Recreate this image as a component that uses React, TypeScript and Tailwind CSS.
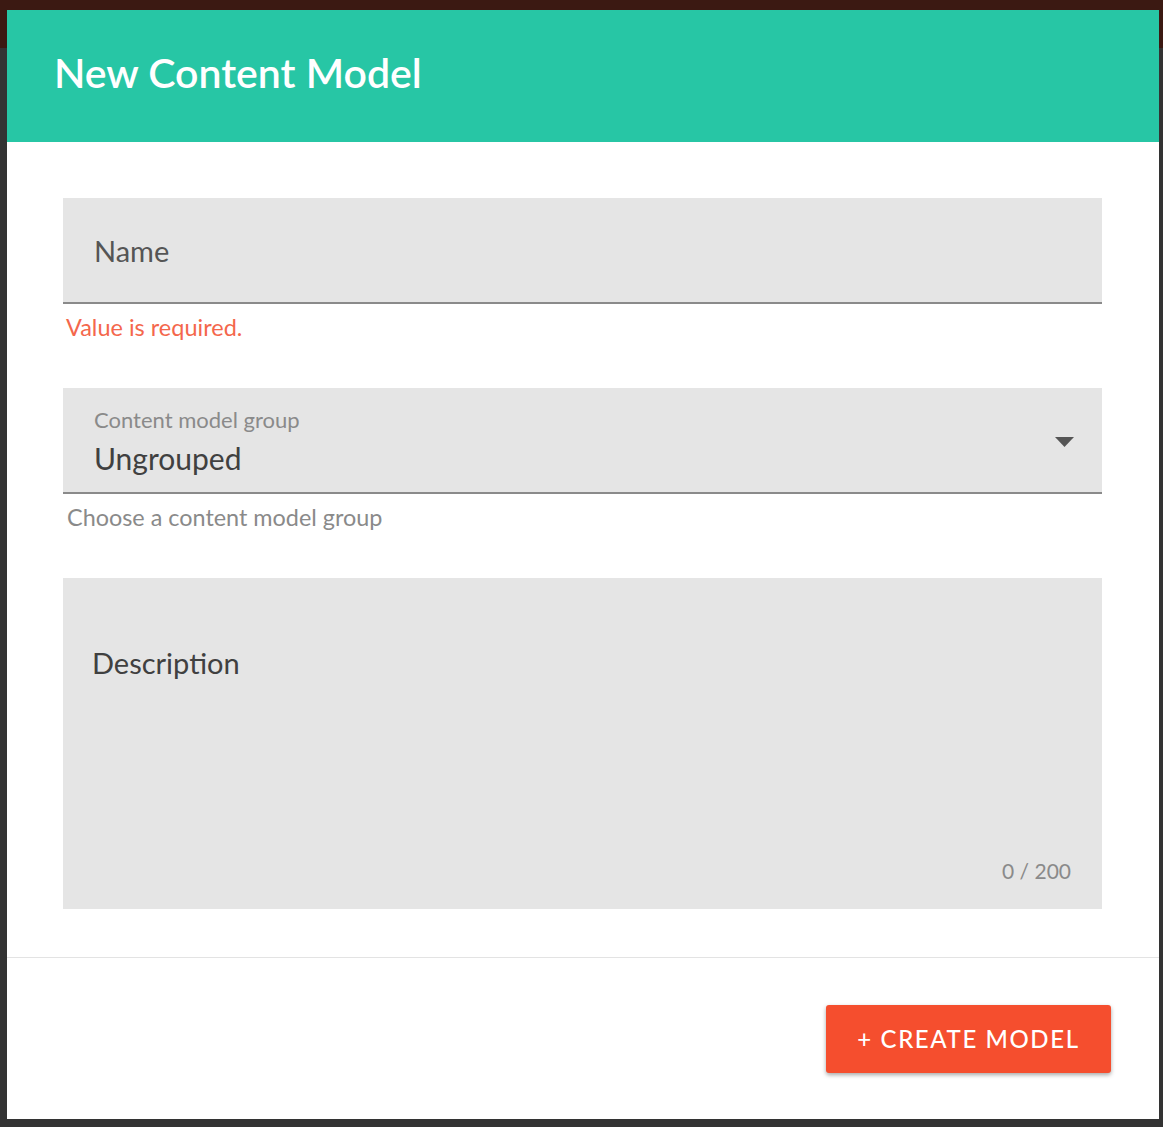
import { useState } from 'react';

export default function App() {
  const [desc, setDesc] = useState('');

  return (
    <div
      className="w-[1163px] h-[1127px] pt-[10px] pl-[7px] bg-[linear-gradient(#3b1912_0_48px,#333333_48px)]"
      style={{ fontFamily: 'Lato, "Open Sans", sans-serif' }}
    >
      <div className="w-[1152px] h-[1109px] bg-white flex flex-col">
        {/* Header */}
        <div className="h-[132px] bg-[#27c6a5] flex items-center pl-[47px] shrink-0">
          <h1 className="text-[41px] font-semibold text-white leading-none pb-[8px]">New Content Model</h1>
        </div>

        {/* Body */}
        <div className="flex flex-col pl-[56px] pr-[57px] pt-[56px]">
          {/* Name */}
          <div className="h-[106px] bg-[#e5e5e5] border-b-2 border-[#8a8a8a] flex items-center pl-[31px]">
            <span className="text-[29px] text-[#555] pt-[1px]">Name</span>
          </div>
          <div className="h-[50px] pl-[3px] pt-[12px] text-[23.5px] text-[#f4674c] leading-none">Value is required.</div>

          {/* Group select */}
          <div className="mt-[34px] h-[106px] bg-[#e5e5e5] border-b-2 border-[#8a8a8a] flex items-center pl-[31px] pr-[28px]">
            <div className="flex-1 flex flex-col pt-[2px]">
              <span className="text-[22px] text-[#8a8a8a] leading-none">Content model group</span>
              <span className="text-[30px] text-[#404040] leading-none mt-[12px]">Ungrouped</span>
            </div>
            <svg width="19" height="10" viewBox="0 0 19 10" className="mt-[4px]">
              <path d="M0 0 L19 0 L9.5 10 Z" fill="#555" />
            </svg>
          </div>
          <div className="h-[50px] pl-[4px] pt-[12px] text-[23.4px] text-[#8a8a8a] leading-none">Choose a content model group</div>

          {/* Description */}
          <div className="mt-[34px] h-[331px] bg-[#e5e5e5] flex flex-col pl-[29px] pr-[31px]">
            <textarea
              value={desc}
              onChange={(e) => setDesc(e.target.value)}
              placeholder="Description"
              className="mt-[70px] h-[200px] bg-transparent outline-none resize-none text-[29px] text-[#404040] placeholder:text-[#404040] leading-none"
            />
            <span className="self-end text-[21px] text-[#8a8a8a] leading-none mt-[12px]">0 / 200</span>
          </div>
        </div>

        {/* Footer */}
        <div className="mt-[48px] border-t border-[#e3e3e3] flex justify-end pr-[48px] pt-[47px]">
          <button className="w-[285px] h-[68px] bg-[#f54e2e] rounded-[3px] shadow-[0_2px_4px_rgba(0,0,0,0.35)] text-white text-[24px] font-medium tracking-[1.6px] flex items-center justify-center">
            + CREATE MODEL
          </button>
        </div>
      </div>
    </div>
  );
}
